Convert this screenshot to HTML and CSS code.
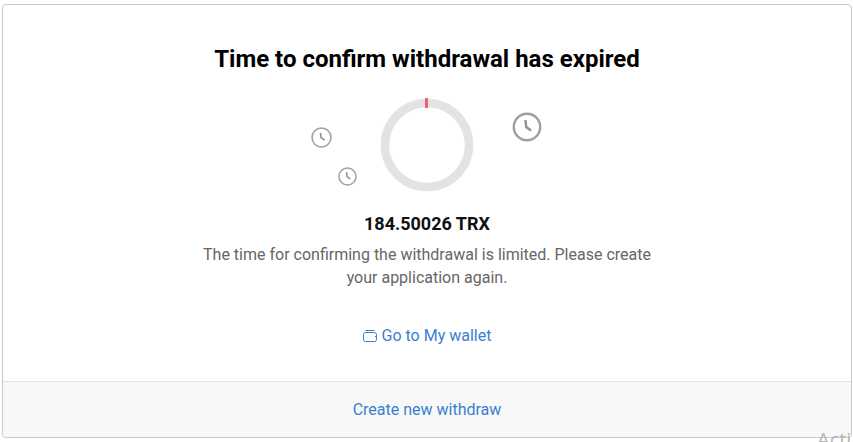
FILE: index.html
```html
<!DOCTYPE html>
<html lang="en">
<head>
    <meta charset="UTF-8">
    <meta name="viewport" content="width=device-width, initial-scale=1.0">
    <title>Withdrawal expired</title>
    <link rel="stylesheet" href="styles.css">
</head>
<body>
    <div class="card">
        <div class="card-body">
            <h1 class="title">Time to confirm withdrawal has expired</h1>
            <div class="timer">
                <svg class="ring" width="94" height="94" viewBox="0 0 94 94">
                    <circle cx="47" cy="47" r="42" fill="none" stroke="#e3e3e3" stroke-width="8.5"/>
                    <rect x="45" y="0" width="3" height="10" fill="#ee5f70"/>
                </svg>
                <svg class="clock clock-left" viewBox="0 0 20 20">
                    <circle cx="10" cy="10" r="9" fill="none" stroke="#a0a0a0" stroke-width="1.5"/>
                    <path d="M9 5.5 L9.5 10 L13 12.5" fill="none" stroke="#909090" stroke-width="1.5"/>
                </svg>
                <svg class="clock clock-low" viewBox="0 0 20 20">
                    <circle cx="10" cy="10" r="9" fill="none" stroke="#a0a0a0" stroke-width="1.6"/>
                    <path d="M9 5.5 L9.5 10 L13 12.5" fill="none" stroke="#909090" stroke-width="1.6"/>
                </svg>
                <svg class="clock clock-right" viewBox="0 0 30 30">
                    <circle cx="15" cy="15" r="13.2" fill="none" stroke="#a0a0a0" stroke-width="2.4"/>
                    <path d="M13.5 8 L14.2 15 L19 18.5" fill="none" stroke="#909090" stroke-width="2.4"/>
                </svg>
            </div>
            <div class="amount">184.50026 TRX</div>
            <p class="message">The time for confirming the withdrawal is limited. Please create your application again.</p>
            <a class="wallet-link" href="#">
                <svg class="wallet-icon" width="14" height="12" viewBox="0 0 14 12">
                    <path d="M2.5 0.5 H11.5 M2.5 2.5 H11.5 Q13.5 2.5 13.5 4.5 V9.5 Q13.5 11.5 11.5 11.5 H2.5 Q0.5 11.5 0.5 9.5 V4.5 Q0.5 2.5 2.5 2.5 M12 6.5 H13.5" fill="none" stroke="#3a80cf" stroke-width="1"/>
                </svg>
                Go to My wallet
            </a>
        </div>
        <div class="card-footer">
            <a href="#">Create new withdraw</a>
        </div>
    </div>
    <div class="watermark">Acti</div>
</body>
</html>
```

FILE: styles.css
```css
html, body {
    height: 100%;
}

body {
    margin: 0;
    padding: 4px 1px 4px 2px;
    box-sizing: border-box;
    font-family: Roboto, sans-serif;
    background: #fff;
    overflow: hidden;
    position: relative;
}

.card {
    height: 434px;
    box-sizing: border-box;
    border: 1px solid #c9c9c9;
    border-radius: 4px;
    display: flex;
    flex-direction: column;
}

.card-body {
    flex: 1;
    display: flex;
    flex-direction: column;
    align-items: center;
    padding-top: 40px;
}

.title {
    margin: 0;
    font-size: 24px;
    font-weight: 700;
    line-height: 28px;
    color: #000;
}

.timer {
    position: relative;
    width: 94px;
    height: 94px;
    margin-top: 25px;
}

.ring {
    display: block;
}

.clock {
    position: absolute;
}

.clock-left {
    left: -69px;
    top: 29px;
    width: 21px;
    height: 21px;
}

.clock-low {
    left: -42px;
    top: 69px;
    width: 19px;
    height: 19px;
}

.clock-right {
    left: 132px;
    top: 14px;
    width: 30px;
    height: 30px;
}

.amount {
    margin-top: 20px;
    font-size: 18px;
    font-weight: 700;
    line-height: 24px;
    color: #111;
}

.message {
    width: 470px;
    margin: 7px 0 0;
    font-size: 16px;
    line-height: 23px;
    text-align: center;
    color: #666;
}

.wallet-link {
    display: flex;
    align-items: center;
    gap: 5px;
    margin-top: 35px;
    font-size: 16px;
    line-height: 24px;
    color: #3a80cf;
    text-decoration: none;
}

.card-footer {
    height: 56px;
    box-sizing: border-box;
    border-top: 1px solid #e2e2e2;
    background: #f8f8f8;
    display: flex;
    align-items: center;
    justify-content: center;
    font-size: 16px;
    border-radius: 0 0 4px 4px;
}

.card-footer a {
    color: #3a80cf;
    text-decoration: none;
}

.watermark {
    position: absolute;
    left: 817px;
    top: 426px;
    font-family: "Open Sans", sans-serif;
    font-size: 20px;
    color: #b5b5b5;
    white-space: nowrap;
}
```
